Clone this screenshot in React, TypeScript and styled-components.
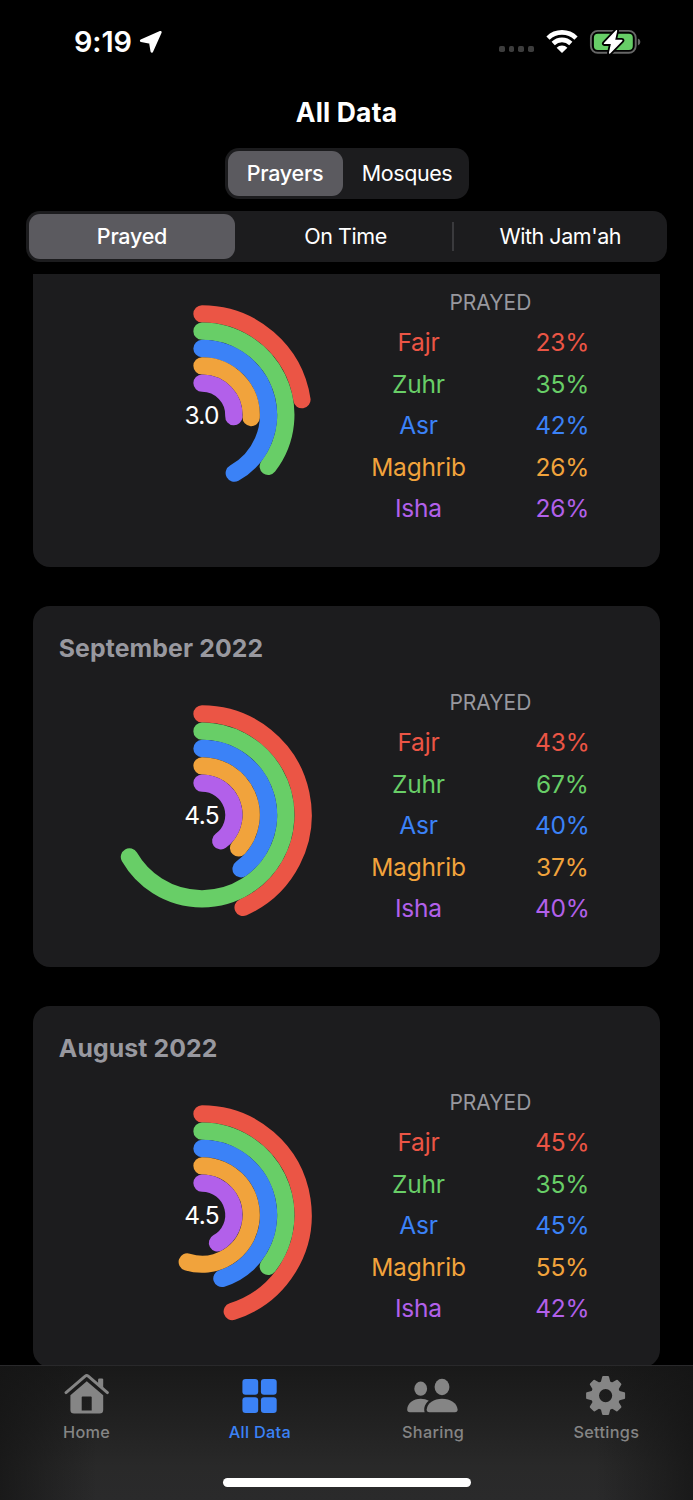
import React from "react";
import styled, { createGlobalStyle } from "styled-components";

const Global = createGlobalStyle`
  * { box-sizing: border-box; }
  html, body { margin: 0; padding: 0; background: #000; }
  body { font-family: Inter, "Liberation Sans", sans-serif; color: #fff; -webkit-font-smoothing: antialiased; }
`;

const Screen = styled.div`
  width: 693px;
  height: 1500px;
  display: flex;
  flex-direction: column;
  overflow: hidden;
  background: #000;
`;

const StatusBar = styled.header`
  height: 83px;
  flex: none;
  display: flex;
  justify-content: space-between;
  align-items: flex-start;
  padding: 24px 52px 0 74px;
`;

const Clock = styled.div`
  display: flex;
  align-items: center;
  height: 35px;
  font-size: 28.8px;
  font-weight: 600;
  letter-spacing: -0.1px;
  svg { margin-left: 7.5px; }
`;

const StatusIcons = styled.div`
  display: flex;
  align-items: center;
  gap: 11px;
  height: 35px;
`;

const Dots = styled.div`
  display: flex;
  gap: 4px;
  margin: 15px 1px 0 0;
  i { width: 5.8px; height: 5.8px; border-radius: 1.8px; background: #3d3d3d; }
`;

const Title = styled.h1`
  margin: 0 0 7px;
  height: 58px;
  flex: none;
  line-height: 58px;
  text-align: center;
  font-size: 26.5px;
  font-weight: 650;
  letter-spacing: 0.15px;
`;

const Segmented = styled.div<{ $width: number }>`
  flex: none;
  align-self: center;
  display: flex;
  width: ${(p) => p.$width}px;
  height: 51px;
  margin-bottom: 12px;
  padding: 3px;
  border-radius: 14px;
  background: #1c1c1e;
`;

const Segment = styled.button<{ $on?: boolean; $width: number; $inset?: number }>`
  flex: none;
  width: ${(p) => p.$width}px;
  display: flex;
  align-items: center;
  justify-content: center;
  padding: 0 0 1px ${(p) => p.$inset ?? 0}px;
  border: 0;
  border-radius: 11px;
  background: ${(p) => (p.$on ? "#5b5a5f" : "transparent")};
  color: #fff;
  font: ${(p) => (p.$on ? 500 : 400)} 21.5px Inter, sans-serif;
  letter-spacing: ${(p) => (p.$on ? -0.25 : -0.45)}px;
  white-space: nowrap;
`;

const Rule = styled.span`
  width: 1.5px;
  height: 29px;
  align-self: center;
  background: #3a3a3d;
`;

const Feed = styled.main`
  flex: 1 1 0;
  min-height: 0;
  overflow: hidden;
  display: flex;
  flex-direction: column;
  align-items: center;
  gap: 39px;
`;

const Card = styled.section`
  flex: none;
  width: 627.5px;
  height: 361px;
  padding: 26px;
  border-radius: 17px;
  background: #1c1c1e;
  &:first-child { margin-top: -67.7px; }
`;

const Month = styled.h2`
  margin: 0;
  height: 32px;
  line-height: 32px;
  color: #98989f;
  font-size: 24.8px;
  font-weight: 700;
  letter-spacing: 0.12px;
`;

const Body = styled.div`
  display: grid;
  grid-template-columns: 1fr 1fr;
  height: 261px;
`;

const ChartBox = styled.div`
  display: flex;
  justify-content: center;
  padding: 40.5px 1.4px 0 0;
`;

const Stats = styled.div`
  padding-top: 23px;
`;

const StatsHead = styled.div`
  height: 34px;
  line-height: 31px;
  text-align: center;
  color: #98989f;
  font-size: 21px;
`;

const StatRow = styled.div<{ $color: string }>`
  display: grid;
  grid-template-columns: 1fr 1fr;
  height: 41.5px;
  align-items: center;
  text-align: center;
  color: ${(p) => p.$color};
  font-size: 24.5px;
  letter-spacing: -0.2px;
`;

const TabBar = styled.nav`
  height: 135px;
  flex: none;
  display: flex;
  flex-direction: column;
  align-items: center;
  border-top: 1px solid #29292b;
  background:
    linear-gradient(90deg, rgba(20, 20, 20, 0.75), rgba(20, 20, 20, 0) 14%, rgba(20, 20, 20, 0) 86%, rgba(20, 20, 20, 0.75)),
    linear-gradient(180deg, #191919, #222 45%, #292929 75%, #2a2a2b);
`;

const Tabs = styled.div`
  display: flex;
  width: 100%;
  height: 112px;
`;

const Tab = styled.a<{ $on?: boolean }>`
  flex: 1;
  display: flex;
  flex-direction: column;
  align-items: center;
  color: ${(p) => (p.$on ? "#3b82f6" : "#858585")};
  font-size: 16.3px;
  font-weight: 500;
  letter-spacing: 0.3px;
  svg { margin-top: 5px; }
  span { line-height: 22px; margin-top: 6px; }
`;

const HomeIndicator = styled.div`
  width: 248px;
  height: 9px;
  border-radius: 5px;
  background: #fff;
`;

const prayers = [
  { name: "Fajr", color: "#eb5545" },
  { name: "Zuhr", color: "#68ce67" },
  { name: "Asr", color: "#3b82f7" },
  { name: "Maghrib", color: "#f1a33c" },
  { name: "Isha", color: "#b260ea" },
];

const months = [
  { title: "", days: 31, avg: "3.0", counts: [7, 11, 13, 8, 8] },
  { title: "September 2022", days: 30, avg: "4.5", counts: [13, 20, 12, 11, 12] },
  { title: "August 2022", days: 31, avg: "4.5", counts: [14, 11, 14, 17, 13] },
];

function Rings({ counts, days, avg }: { counts: number[]; days: number; avg: string }) {
  return (
    <svg width="220" height="220" viewBox="-110 -110 220 220">
      {counts.map((n, i) => {
        const r = 101.1 - i * 17.3;
        const a = (n / days) * Math.PI * 2;
        return (
          <path
            key={i}
            d={`M0 ${-r}A${r} ${r} 0 ${a > Math.PI ? 1 : 0} 1 ${r * Math.sin(a)} ${-r * Math.cos(a)}`}
            fill="none"
            stroke={prayers[i].color}
            strokeWidth="17.3"
            strokeLinecap="round"
          />
        );
      })}
      <text x="-0.4" y="9" textAnchor="middle" fill="#fff" fontSize="24.5" letterSpacing="-0.7">{avg}</text>
    </svg>
  );
}

const HomeIcon = () => (
  <svg width="46" height="44" viewBox="63.6 1371 46 44" fill="currentColor">
    <path d="M65.6 1392.6L84.8 1376.1Q86.3 1374.9 87.8 1376.1L107 1392.6" fill="none" stroke="currentColor" strokeWidth="2.9" strokeLinecap="round" />
    <path d="M97.7 1379.6Q97.7 1378.4 98.9 1378.4H101.6Q102.8 1378.4 102.8 1379.6V1388.5L97.7 1384.2Z" />
    <path fillRule="evenodd" d="M86.4 1381.3L102.8 1395.3V1410Q102.8 1413.6 99.2 1413.6H73.6Q70 1413.6 70 1410V1395.3ZM82.2 1396.4Q81.3 1396.4 81.3 1397.3V1410.6H91.3V1397.3Q91.3 1396.4 90.4 1396.4Z" />
  </svg>
);

const GridIcon = () => (
  <svg width="46" height="44" viewBox="236.9 1371 46 44" fill="currentColor">
    {[242.3, 260.8].map((x) => [1378.9, 1397.2].map((y) => (
      <rect key={x + y} x={x} y={y} width="15.8" height="15.8" rx="3.2" />
    )))}
  </svg>
);

const PeopleIcon = () => (
  <svg width="54" height="44" viewBox="406.1 1371 54 44" fill="currentColor">
    <ellipse cx="420.8" cy="1388.7" rx="6.4" ry="7.1" />
    <ellipse cx="442.1" cy="1387" rx="7.4" ry="8.3" />
    <path d="M424.7 1412.2H410Q407.3 1412.2 407.3 1409.6C407.5 1403 413.5 1398.7 420.8 1398.7C424 1398.7 426.7 1399.4 428.9 1400.7C425.3 1403.5 423.6 1407.5 424.7 1412.2Z" />
    <path d="M429.5 1412.2Q426.7 1412.2 426.8 1409.5C427.3 1403 434 1398.7 442.2 1398.7C450.4 1398.7 457.1 1403 457.7 1409.5Q457.8 1412.2 455 1412.2Z" />
  </svg>
);

const GearIcon = () => (
  <svg width="46" height="44" viewBox="-22.6 -24.6 46 44" fill="currentColor" overflow="visible">
    {[0, 45, 90, 135, 180, 225, 270, 315].map((d) => (
      <path key={d} transform={`rotate(${d})`} d="M-2.4 -18.4H2.4L4 -12H-4Z" stroke="currentColor" strokeWidth="2.2" strokeLinejoin="round" />
    ))}
    <circle r="10.6" fill="none" stroke="currentColor" strokeWidth="8" />
  </svg>
);

const ArrowIcon = () => (
  <svg width="24" height="24" viewBox="140 30 24 24">
    <path d="M161.4 32.2L142.2 40.8L151.3 42.4L152.8 51.4Z" fill="#fff" stroke="#fff" strokeWidth="2.6" strokeLinejoin="round" />
  </svg>
);

const WifiIcon = () => (
  <svg width="32" height="24" viewBox="546 29 32 24" fill="none" stroke="#fff" strokeWidth="4.6">
    <path d="M548 37.1A20 20 0 0 1 576 37.1" />
    <path d="M553.2 42.5A12.6 12.6 0 0 1 570.8 42.5" />
    <path d="M562 51.9L556.6 46.7A7.8 7.8 0 0 1 567.4 46.7Z" fill="#fff" stroke="none" />
  </svg>
);

const BatteryIcon = () => (
  <svg width="52" height="26" viewBox="589 28 52 26">
    <rect x="590.9" y="29.9" width="44.8" height="21.9" rx="6.8" fill="none" stroke="#666" strokeWidth="1.9" />
    <path d="M637.9 37.6Q640.4 38.6 640.4 41T637.9 44.4Z" fill="#666" />
    <rect x="593.9" y="32.8" width="38.9" height="16.2" rx="4" fill="#67ce67" />
    <path d="M616.5 29.8L604.5 42.4H611.7L609.6 52L621.8 39.4H614.4Z" fill="#fff" stroke="#000" strokeWidth="5" strokeLinejoin="round" />
    <path d="M616.5 29.8L604.5 42.4H611.7L609.6 52L621.8 39.4H614.4Z" fill="#fff" stroke="#fff" strokeWidth="1.4" strokeLinejoin="round" />
  </svg>
);

const tabs = [
  { label: "Home", Icon: HomeIcon },
  { label: "All Data", Icon: GridIcon, on: true },
  { label: "Sharing", Icon: PeopleIcon },
  { label: "Settings", Icon: GearIcon },
];

export default function App() {
  return (
    <>
      <Global />
      <Screen>
        <StatusBar>
          <Clock>9:19<ArrowIcon /></Clock>
          <StatusIcons>
            <Dots><i /><i /><i /><i /></Dots>
            <WifiIcon />
            <BatteryIcon />
          </StatusIcons>
        </StatusBar>
        <Title>All Data</Title>
        <Segmented $width={244}>
          <Segment $on $width={115}>Prayers</Segment>
          <Segment $width={123} $inset={6}>Mosques</Segment>
        </Segmented>
        <Segmented $width={641}>
          <Segment $on $width={206}>Prayed</Segment>
          <Segment $width={217} $inset={4}>On Time</Segment>
          <Rule />
          <Segment $width={210.5} $inset={3}>With Jam'ah</Segment>
        </Segmented>
        <Feed>
          {months.map((m) => (
            <Card key={m.title}>
              <Month>{m.title}</Month>
              <Body>
                <ChartBox><Rings counts={m.counts} days={m.days} avg={m.avg} /></ChartBox>
                <Stats>
                  <StatsHead>PRAYED</StatsHead>
                  {prayers.map((p, i) => (
                    <StatRow key={p.name} $color={p.color}>
                      <span>{p.name}</span>
                      <span>{Math.round((m.counts[i] / m.days) * 100)}%</span>
                    </StatRow>
                  ))}
                </Stats>
              </Body>
            </Card>
          ))}
        </Feed>
        <TabBar>
          <Tabs>
            {tabs.map(({ label, Icon, on }) => (
              <Tab key={label} $on={on}><Icon /><span>{label}</span></Tab>
            ))}
          </Tabs>
          <HomeIndicator />
        </TabBar>
      </Screen>
    </>
  );
}
